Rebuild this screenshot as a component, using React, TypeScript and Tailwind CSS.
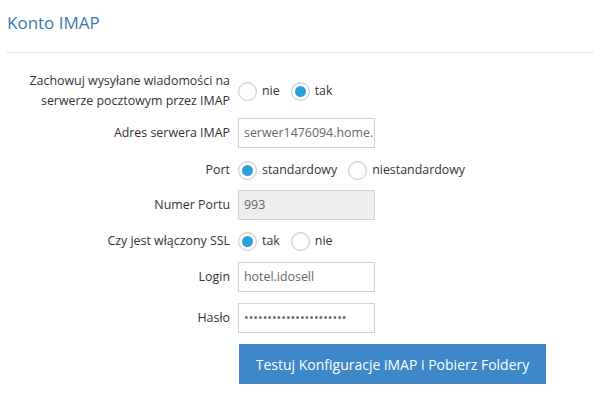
import React from "react";

const Radio = ({ checked, label }: { checked?: boolean; label: string }) => (
  <label className="flex items-center mr-[11px]">
    <span className="w-[19px] h-[19px] rounded-full border border-[#c8c8c8] bg-white flex items-center justify-center shadow-[inset_0_1px_2px_rgba(0,0,0,0.08)]">
      {checked && <span className="w-[11px] h-[11px] rounded-full bg-[#2d9fd9]" />}
    </span>
    <span className="ml-[5px]">{label}</span>
  </label>
);

const Row = ({ label, children, cls }: { label: React.ReactNode; children: React.ReactNode; cls: string }) => (
  <div className={`flex items-center ${cls}`}>
    <div className="w-[230px] text-right leading-[20px]">{label}</div>
    <div className="ml-[8px] flex items-center">{children}</div>
  </div>
);

const Input = ({ value, disabled }: { value: string; disabled?: boolean }) => (
  <div className={`w-[137px] h-[30px] border border-[#d2d2d2] px-[5px] flex items-center overflow-hidden whitespace-nowrap text-[#666] ${disabled ? "bg-[#eeeeee]" : "bg-white"}`}>
    {value}
  </div>
);

export default function App() {
  return (
    <div className="w-[600px] h-[418px] bg-white text-[12.4px] text-[#333]" style={{ fontFamily: '"Open Sans", sans-serif' }}>
      <div className="pl-[7px] pt-[10px] h-[52px] text-[17px] text-[#3c78b4]">Konto IMAP</div>
      <div className="mx-[7px] border-t border-dotted border-[#d5d5d5]" />
      <Row cls="mt-[18px] h-[40px]" label={<>Zachowuj wysyłane wiadomości na<br />serwerze pocztowym przez IMAP</>}>
        <Radio label="nie" /><Radio checked label="tak" />
      </Row>
      <Row cls="mt-[7px] h-[30px]" label="Adres serwera IMAP"><Input value="serwer1476094.home.pl" /></Row>
      <Row cls="mt-[7px] h-[30px]" label="Port">
        <Radio checked label="standardowy" /><Radio label="niestandardowy" />
      </Row>
      <Row cls="mt-[5px] h-[30px]" label="Numer Portu"><Input value="993" disabled /></Row>
      <Row cls="mt-[6px] h-[30px]" label="Czy jest włączony SSL">
        <Radio checked label="tak" /><Radio label="nie" />
      </Row>
      <Row cls="mt-[6px] h-[30px]" label="Login"><Input value="hotel.idosell" /></Row>
      <Row cls="mt-[11px] h-[30px]" label="Hasło"><Input value="••••••••••••••••••••••" /></Row>
      <div className="mt-[11px] ml-[239px] w-[307px] h-[40px] bg-[#3e87c8] text-white text-[14px] flex items-center justify-center">
        Testuj Konfiguracje iMAP i Pobierz Foldery
      </div>
    </div>
  );
}
